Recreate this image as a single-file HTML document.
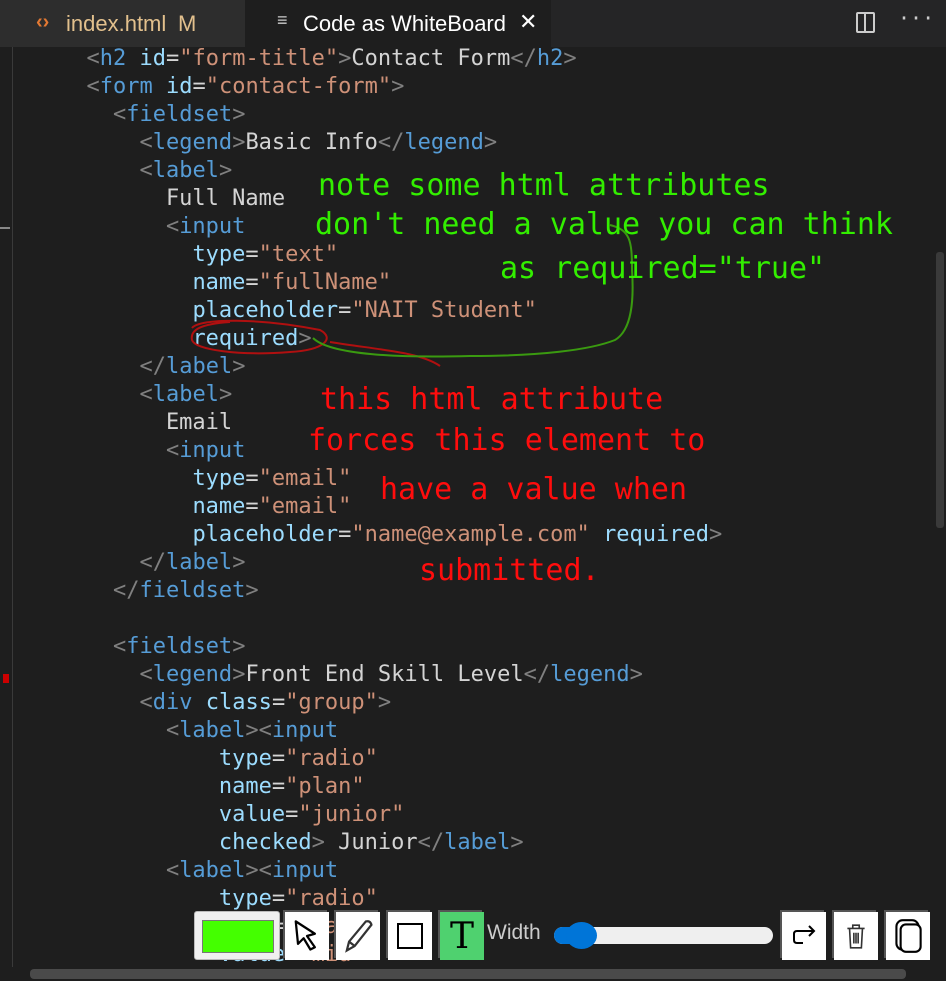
<!DOCTYPE html>
<html><head><meta charset="utf-8"><style>
body{margin:0;width:946px;height:981px;background:#1e1e1e;overflow:hidden;position:relative;font-family:"DejaVu Sans Mono","Liberation Mono",monospace}
.tabs{position:absolute;left:0;top:0;width:946px;height:47px;background:#252526}
.tab1{position:absolute;left:0;top:0;width:245px;height:47px;background:#2d2d2d;font-family:"Liberation Sans",sans-serif;font-size:22px;color:#e2c08d}
.tab2{position:absolute;left:245px;top:0;width:306px;height:47px;background:#1e1e1e;font-family:"Liberation Sans",sans-serif;font-size:22px;color:#fff}
pre{position:absolute;left:7px;top:45px;margin:0;font-size:22px;line-height:28px;color:#d4d4d4;font-family:"DejaVu Sans Mono",monospace}
.t{color:#569cd6}.b{color:#808080}.a{color:#9cdcfe}.s{color:#ce9178}
.n{position:absolute;font-size:30px;white-space:pre;line-height:36px}
.g{color:#33ee00}.r{color:#ff0d0d}
.btn{position:absolute;top:912px;width:44px;height:48px;background:#fff;box-shadow:-2px -2px 0 #555;display:flex;align-items:center;justify-content:center}
</style></head><body>
<pre><span class="b">      &lt;</span><span class="t">h2</span> <span class="a">id</span>=<span class="s">"form-title"</span><span class="b">&gt;</span>Contact Form<span class="b">&lt;/</span><span class="t">h2</span><span class="b">&gt;</span>
<span class="b">      &lt;</span><span class="t">form</span> <span class="a">id</span>=<span class="s">"contact-form"</span><span class="b">&gt;</span>
<span class="b">        &lt;</span><span class="t">fieldset</span><span class="b">&gt;</span>
<span class="b">          &lt;</span><span class="t">legend</span><span class="b">&gt;</span>Basic Info<span class="b">&lt;/</span><span class="t">legend</span><span class="b">&gt;</span>
<span class="b">          &lt;</span><span class="t">label</span><span class="b">&gt;</span>
            Full Name
<span class="b">            &lt;</span><span class="t">input</span>
              <span class="a">type</span>=<span class="s">"text"</span>
              <span class="a">name</span>=<span class="s">"fullName"</span>
              <span class="a">placeholder</span>=<span class="s">"NAIT Student"</span>
              <span class="a">required</span><span class="b">&gt;</span>
<span class="b">          &lt;/</span><span class="t">label</span><span class="b">&gt;</span>
<span class="b">          &lt;</span><span class="t">label</span><span class="b">&gt;</span>
            Email
<span class="b">            &lt;</span><span class="t">input</span>
              <span class="a">type</span>=<span class="s">"email"</span>
              <span class="a">name</span>=<span class="s">"email"</span>
              <span class="a">placeholder</span>=<span class="s">"name@example.com"</span> <span class="a">required</span><span class="b">&gt;</span>
<span class="b">          &lt;/</span><span class="t">label</span><span class="b">&gt;</span>
<span class="b">        &lt;/</span><span class="t">fieldset</span><span class="b">&gt;</span>

<span class="b">        &lt;</span><span class="t">fieldset</span><span class="b">&gt;</span>
<span class="b">          &lt;</span><span class="t">legend</span><span class="b">&gt;</span>Front End Skill Level<span class="b">&lt;/</span><span class="t">legend</span><span class="b">&gt;</span>
<span class="b">          &lt;</span><span class="t">div</span> <span class="a">class</span>=<span class="s">"group"</span><span class="b">&gt;</span>
<span class="b">            &lt;</span><span class="t">label</span><span class="b">&gt;&lt;</span><span class="t">input</span>
                <span class="a">type</span>=<span class="s">"radio"</span>
                <span class="a">name</span>=<span class="s">"plan"</span>
                <span class="a">value</span>=<span class="s">"junior"</span>
                <span class="a">checked</span><span class="b">&gt;</span> Junior<span class="b">&lt;/</span><span class="t">label</span><span class="b">&gt;</span>
<span class="b">            &lt;</span><span class="t">label</span><span class="b">&gt;&lt;</span><span class="t">input</span>
                <span class="a">type</span>=<span class="s">"radio"</span>
                <span class="a">name</span>=<span class="s">"plan"</span>
                <span class="a">value</span>=<span class="s">"mid"</span></pre>
<div class="tabs"></div>
<div class="tab1"><span style="position:absolute;left:36px;top:11px;color:#e37933;font-size:20px;font-weight:bold">&lsaquo;&rsaquo;</span><span style="position:absolute;left:66px;top:11px">index.html</span><span style="position:absolute;left:178px;top:11px">M</span></div>
<div class="tab2"><span style="position:absolute;left:32px;top:10px;font-size:18px;color:#ccc">&#8801;</span><span style="position:absolute;left:58px;top:11px">Code as WhiteBoard</span><span style="position:absolute;left:274px;top:9px;font-size:22px">&#x2715;</span></div>
<div style="position:absolute;left:856px;top:12px;width:19px;height:21px;border:2px solid #ccc;border-radius:2px;box-sizing:border-box"><div style="position:absolute;left:6px;top:0;width:2px;height:17px;background:#ccc"></div></div>
<div style="position:absolute;left:898px;top:6px;color:#ccc;font-size:20px">&middot;&middot;&middot;</div>
<div style="position:absolute;left:12px;top:47px;width:1px;height:920px;background:#3a3a3a"></div>
<div style="position:absolute;left:0;top:227px;width:10px;height:2px;background:#888"></div>
<div style="position:absolute;left:3px;top:674px;width:6px;height:9px;background:#c00"></div>
<div style="position:absolute;left:936px;top:252px;width:8px;height:276px;background:#3a3a3a;border-radius:3px"></div>
<svg style="position:absolute;left:0;top:0" width="946" height="981">
<path d="M192 328 C200 318 260 318 320 330 C335 338 325 350 290 352 C240 356 195 350 192 340 C190 330 200 324 230 322" stroke="#b01010" stroke-width="2" fill="none"/>
<path d="M330 342 C380 350 420 352 440 366" stroke="#b01010" stroke-width="2" fill="none"/>
<path d="M313 338 C330 355 400 358 470 356 C540 356 590 350 615 340 C632 330 634 300 632 270 C632 240 630 230 610 225" stroke="#3a9a10" stroke-width="2" fill="none"/>
</svg>
<div class="n g" style="left:318px;top:168px">note some html attributes</div>
<div class="n g" style="left:315px;top:207px">don't need a value you can think</div>
<div class="n g" style="left:500px;top:251px">as required="true"</div>
<div class="n r" style="left:320px;top:382px">this html attribute</div>
<div class="n r" style="left:308px;top:423px">forces this element to</div>
<div class="n r" style="left:380px;top:472px">have a value when</div>
<div class="n r" style="left:419px;top:553px">submitted.</div>
<div style="position:absolute;left:194px;top:911px;width:86px;height:49px;background:#f0f0f0;border:1px solid #bbb;border-radius:3px;box-sizing:border-box"><div style="position:absolute;left:7px;top:8px;width:70px;height:31px;background:#44ff00;border:1px solid #777"></div></div>
<div class="btn" style="left:285px"><svg width="34" height="36" viewBox="0 0 30 32"><path d="M5 3 L22 14 L15 16 L22 26 L18 28 L12 18 L7 23 Z" fill="none" stroke="#000" stroke-width="2" stroke-linejoin="round"/></svg></div>
<div class="btn" style="left:336px"><svg width="34" height="38" viewBox="0 0 30 34"><path d="M5 30 L7 22 L22 4 Q26 3 27 7 L12 26 Z M7 22 L12 26" fill="none" stroke="#333" stroke-width="2"/></svg></div>
<div class="btn" style="left:388px"><div style="width:26px;height:26px;border:2px solid #000;box-sizing:border-box"></div></div>
<div class="btn" style="left:440px;background:#4fd16f"><span style="font-family:'DejaVu Serif',serif;font-size:36px;color:#000">T</span></div>
<div style="position:absolute;left:487px;top:921px;font-family:'Liberation Sans',sans-serif;font-size:21px;color:#ccc">Width</div>
<div style="position:absolute;left:554px;top:927px;width:219px;height:17px;background:#efefef;border-radius:9px"></div>
<div style="position:absolute;left:554px;top:927px;width:30px;height:17px;background:#0075d8;border-radius:9px"></div>
<div style="position:absolute;left:566px;top:922px;width:31px;height:27px;background:#0075d8;border-radius:50%"></div>
<div class="btn" style="left:782px"><svg width="30" height="30" viewBox="0 0 30 30"><path d="M20 5 L25 10 L20 15 M25 10 H8 Q5 10 5 13 V19 Q5 22 8 22 H14" fill="none" stroke="#000" stroke-width="2"/></svg></div>
<div class="btn" style="left:834px"><svg width="28" height="34" viewBox="0 0 26 30"><path d="M5 8 H21 M10 8 V5 H16 V8 M7 8 L8 26 H18 L19 8 M11 12 V22 M13 12 V22 M15 12 V22" fill="none" stroke="#333" stroke-width="1.5"/></svg></div>
<div class="btn" style="left:886px"><svg width="34" height="40" viewBox="0 0 32 38"><rect x="5" y="4" width="21" height="28" rx="6" fill="none" stroke="#000" stroke-width="2"/><rect x="9" y="8" width="19" height="26" rx="5" fill="#fff" stroke="#000" stroke-width="2"/></svg></div>
<div style="position:absolute;left:30px;top:969px;width:876px;height:10px;background:#4a4a4a;border-radius:4px"></div>
</body></html>
